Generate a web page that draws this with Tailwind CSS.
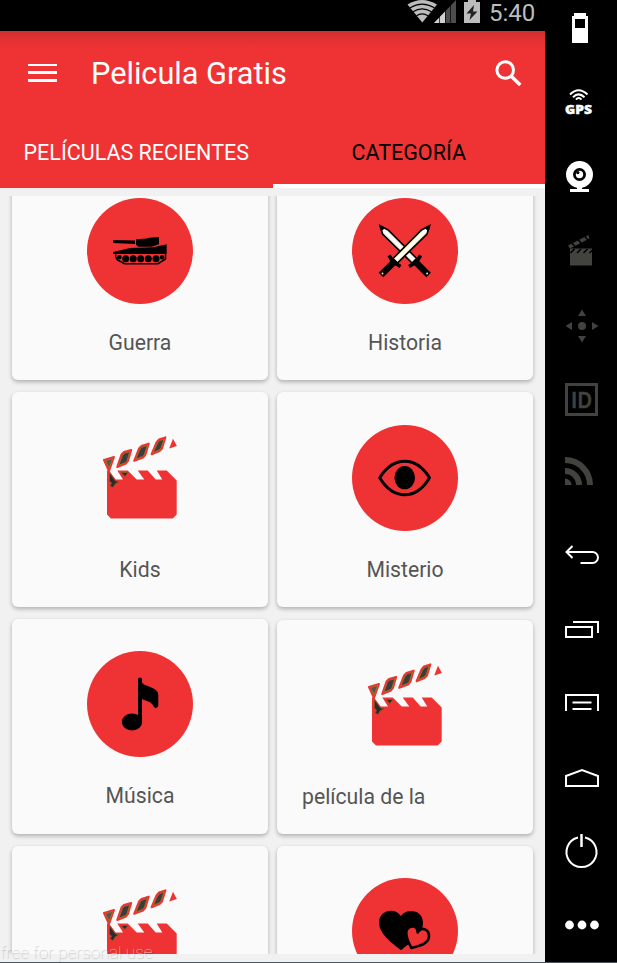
<!DOCTYPE html>
<html lang="es">
<head>
  <meta charset="UTF-8" />
  <meta name="viewport" content="width=device-width, initial-scale=1.0" />
  <title>Pelicula Gratis</title>
  <script src="https://cdn.jsdelivr.net/npm/@tailwindcss/browser@4"></script>
</head>
<body class="relative flex h-[963px] w-[617px] overflow-hidden bg-black font-['Roboto',sans-serif]">

  <!-- shared clapperboard icon -->
  <svg class="hidden">
    <symbol id="clapper" viewBox="0 0 106 106">
      <path fill="#ef3234" d="M20 45.4H22L28.7 54.4H36L30.3 45.4H40.7L49.7 54.4H57.3L50.7 45.4H60.7L68.7 54.4H75.3L69.7 45.4H79.7L89.7 55.4V89.5L85.7 93.4H24L20 89.5Z" />
      <g fill="#3c3c3c" stroke="#ef3234" stroke-width="2" stroke-linejoin="round">
        <path d="M17 35L27 32L22 46Z" fill="#555" />
        <path d="M34.500 29.500L37 27L44.200 25L41 36L39 38.500L30.200 42Z" />
        <path d="M52 23.500L54.500 21L61.700 18.600L58.500 29.500L56 32.500L47.200 35.800Z" />
        <path d="M69.500 17.500L72 14.500L78.400 12.400L75 23.500L72.500 26L64.600 29.200Z" />
      </g>
      <g fill="none" stroke="#a07a1c" stroke-width=".8">
        <path d="M18.600 35.600L25.700 33.500L22.200 43Z" />
        <path d="M35.500 30.300L37.700 28.200L42.800 26.800L39.800 36.200L38 37.800L31.800 40.200Z" />
        <path d="M53 24.300L55.200 22.200L60.300 20.400L57.300 29.500L55.300 31.500L48.800 34Z" />
        <path d="M70.500 18.200L72.700 15.700L77 14.200L73.900 23.200L71.900 25L66.200 27.400Z" />
      </g>
      <path fill="#ef3234" d="M86 13.800L89.900 21L82.200 23.400Z" />
      <path fill="#2b2b2b" stroke="#8b5a1a" stroke-width=".8" d="M22.500 47.500L28 55.500L32 57L28.500 58.500L26 62.500L23 61L24.500 58L22.300 56ZM34 47.500H41L38 51.500Z" />
    </symbol>
  </svg>

  <div class="relative flex h-[962px] w-[545px] flex-col bg-[#f1f1f1]">

    <!-- status bar -->
    <div class="flex h-[31px] shrink-0 items-start justify-end bg-black">
      <svg class="h-[31px] w-[82px]" viewBox="405 0 82 31">
        <path fill="#bdbdbd" d="M407.500 4.500Q422-4.500 437 4.500L422.300 22.500Z" />
        <g fill="none" stroke="#000" stroke-width="1.200">
          <path d="M410 7.800Q422 .3 434.500 7.800M413 11.800Q422 6 431.500 11.800M416.500 15.800Q422 12 428 15.800" />
        </g>
        <path fill="#4d4d4d" d="M434 23L456 0V23Z" />
        <path fill="#d0d0d0" d="M434 23L445 11.500V23Z" />
        <path stroke="#000" stroke-width=".7" d="M439.500 10V23M445.500 5V23M450.500 0V23" />
        <path fill="#bdbdbd" d="M464 2H468V0H476V2H480V23H464Z" />
        <path fill="#222" d="M474 5L466.500 13.500H471L469.500 20L477.500 11.500H473Z" />
      </svg>
      <span class="w-[58px] pl-[2px] text-[24px] leading-[26px] text-[#bdbdbd]">5:40</span>
    </div>

    <!-- toolbar + tabs -->
    <header class="flex h-[157px] shrink-0 flex-col bg-[#ef3234] bg-linear-to-b from-[#d22f30] to-[#ef3234] to-[16px] text-white">
      <div class="flex h-[86px] items-center pr-5 pl-7">
        <svg class="h-5 w-[29px]" viewBox="0 1 29 20" fill="#fff"><path d="M0 0H29V3H0ZM0 8H29V11H0ZM0 16H29V19H0Z" /></svg>
        <h1 class="ml-[34px] grow text-[30.700px] leading-[36px]">Pelicula Gratis</h1>
        <svg class="mr-0.5 h-7 w-7" viewBox="495 60 28 28" fill="none" stroke="#fff">
          <circle cx="505.200" cy="70" r="8.300" stroke-width="3" />
          <path d="M511 76L520.300 85" stroke-width="3.600" />
        </svg>
      </div>
      <nav class="grid h-[71px] grid-cols-2 text-center text-[21.500px] leading-[71px]">
        <a class="h-[71px]">PELÍCULAS RECIENTES</a>
        <a class="h-[71px] border-b-4 border-white text-black">CATEGORÍA</a>
      </nav>
    </header>

    <!-- categories -->
    <main class="mt-2 h-[758px] shrink-0 overflow-hidden text-[21.200px] text-[#555]">
      <div class="-mt-[30.400px] grid grid-cols-[256px_256px] gap-x-[9px] gap-y-3 pl-3">

        <section class="flex h-[214.700px] flex-col items-center rounded-md bg-[#fafafa] pt-[32.500px] shadow-[0_2px_4px_rgba(0,0,0,0.28)]">
          <svg class="size-[106px]" viewBox="0 0 106 106">
            <circle cx="53" cy="53" r="53" fill="#ef3234" />
            <path d="M26 42L48 42.500V46L26 45ZM49 41.300L60 40.500L62 39.800L72 39V46.300L64.700 48.700H51.300L49 46.700ZM26 54L43 50L66 49.300L79.700 46.300V56H26Z" />
            <path fill="none" stroke="#000" stroke-width="1.500" d="M28.700 56.500V59L30.500 62L37.500 65.700H71L78.500 61V56" />
            <circle cx="38.700" cy="60.700" r="3.500" /><circle cx="46.200" cy="60.700" r="3.500" /><circle cx="53.700" cy="60.700" r="3.500" /><circle cx="61.300" cy="60.700" r="3.500" /><circle cx="69" cy="60.700" r="3.500" />
            <circle cx="32.400" cy="59.300" r="2.200" /><circle cx="75" cy="59.300" r="2.200" />
          </svg>
          <p class="mt-[23px] leading-8">Guerra</p>
        </section>

        <section class="flex h-[214.700px] flex-col items-center rounded-md bg-[#fafafa] pt-[32.500px] shadow-[0_2px_4px_rgba(0,0,0,0.28)]">
          <svg class="size-[106px]" viewBox="0 0 106 106">
            <defs>
              <g id="sword">
                <path fill="#fff" stroke="#000" stroke-width="1.700" d="M77.500 27.800L75 36L45.500 65L41 60.500L69.500 32Z" />
                <path d="M78.500 27L76.500 33.500L72.500 30Z" />
                <path fill="none" stroke="#d8bd55" stroke-width=".5" d="M74.500 34.500L45.500 63.400M70 33L42.500 60.500" />
                <path fill="none" stroke="#000" stroke-width="3.600" d="M37 57.300L39.500 61.500L44.500 66L48.500 68.500" />
                <path fill="none" stroke="#000" stroke-width="6.500" d="M43.500 62.500L29 77" />
                <circle cx="30.500" cy="75.500" r="1" fill="#f4e5a0" />
              </g>
            </defs>
            <circle cx="53" cy="53" r="53" fill="#ef3234" />
            <use href="#sword" transform="translate(105.600 0) scale(-1 1)" />
            <use href="#sword" />
          </svg>
          <p class="mt-[23px] leading-8">Historia</p>
        </section>

        <section class="flex h-[214.700px] flex-col items-center rounded-md bg-[#fafafa] pt-[32.500px] shadow-[0_2px_4px_rgba(0,0,0,0.28)]">
          <svg class="size-[106px]"><use href="#clapper" /></svg>
          <p class="mt-[23px] leading-8">Kids</p>
        </section>

        <section class="flex h-[214.700px] flex-col items-center rounded-md bg-[#fafafa] pt-[32.500px] shadow-[0_2px_4px_rgba(0,0,0,0.28)]">
          <svg class="size-[106px]" viewBox="0 0 106 106">
            <circle cx="53" cy="53" r="53" fill="#ef3234" />
            <path fill="none" stroke="#000" stroke-width="3" stroke-linejoin="round" d="M27.700 52.700Q38 36.200 52.700 36.200T77.500 52.700Q67.500 69.700 52.700 69.700T27.700 52.700Z" />
            <ellipse cx="52.700" cy="52.700" rx="10.300" ry="11.600" />
          </svg>
          <p class="mt-[23px] leading-8">Misterio</p>
        </section>

        <section class="flex h-[214.700px] flex-col items-center rounded-md bg-[#fafafa] pt-[32.500px] shadow-[0_2px_4px_rgba(0,0,0,0.28)]">
          <svg class="size-[106px]" viewBox="0 0 106 106">
            <circle cx="53" cy="53" r="53" fill="#ef3234" />
            <ellipse cx="45" cy="71" rx="10.200" ry="8.400" />
            <path d="M51 28Q51 26.500 53 26.500T55 28V31.500C58 36 71.300 36 71.300 44V54Q71 57 68.500 57Q66.500 56.500 66 54C63 50 57 49.500 55 48V71H51Z" />
          </svg>
          <p class="mt-[23px] leading-8">Música</p>
        </section>

        <section class="mt-px flex h-[213.700px] flex-col items-center rounded-md bg-[#fafafa] pt-[32.500px] shadow-[0_2px_4px_rgba(0,0,0,0.28)]">
          <svg class="size-[106px]"><use href="#clapper" /></svg>
          <p class="mt-[23px] w-full pl-[25px] leading-8">película de la</p>
        </section>

        <section class="flex h-[214.700px] flex-col items-center rounded-md bg-[#fafafa] pt-[32.500px] shadow-[0_2px_4px_rgba(0,0,0,0.28)]">
          <svg class="size-[106px]"><use href="#clapper" /></svg>
        </section>

        <section class="flex h-[214.700px] flex-col items-center rounded-md bg-[#fafafa] pt-[32.500px] shadow-[0_2px_4px_rgba(0,0,0,0.28)]">
          <svg class="size-[106px]" viewBox="0 0 106 106">
            <circle cx="53" cy="53" r="53" fill="#ef3234" />
            <path d="M49 72.300C46 69 27 58 27 44.500C27 32 43 29 49 38C54 30 71 31 71 45C71 58 53 68 49 72.300Z" />
            <path fill="#ef3234" stroke="#000" stroke-width="2.600" stroke-linejoin="round" d="M59.500 70C57 66 52 55 55.500 51C59 46.500 65.500 48 65.700 54.500C69 48 77 51 77 58C77 66 67 68 59.500 70Z" />
          </svg>
        </section>
      </div>
    </main>

    <!-- watermark -->
    <p class="absolute bottom-0 left-0 text-[17.300px] leading-[20px] font-thin whitespace-nowrap text-[#fff]/70 [text-shadow:1px_1px_1px_rgba(0,0,0,0.28)]">free for personal use</p>
  </div>

  <!-- emulator side controls -->
  <aside class="flex w-[72px] flex-col bg-black">
    <svg class="h-[65px] w-[72px]" viewBox="545 0 72 65"><path fill="#fff" fill-rule="evenodd" d="M572 16H574V13H586V16H588V43H572ZM575 19V28H585V19Z" /></svg>
    <svg class="h-[75px] w-[72px]" viewBox="545 65 72 75">
      <path fill="none" stroke="#fff" stroke-width="2" d="M570 94.500Q578.500 86 587.500 94.500M573 97.200Q578.500 91.500 584.500 97.200M576 99.600Q578.500 96.500 581.500 99.600" />
      <text x="565" y="113.700" fill="#fff" font-family="Open Sans" font-weight="800" font-size="12" stroke="#fff" stroke-width=".4" textLength="27" lengthAdjust="spacingAndGlyphs">GPS</text>
    </svg>
    <svg class="h-[75px] w-[72px]" viewBox="545 140 72 75" fill="#fff">
      <circle cx="579.500" cy="174.500" r="13.500" />
      <path d="M577 186H582V189H589V192H570V189H577Z" />
      <circle cx="579.500" cy="174.500" r="6.500" fill="#000" />
      <circle cx="579.500" cy="174.500" r="3.700" />
      <circle cx="577.800" cy="172.600" r="1.700" fill="#000" />
    </svg>
    <svg class="h-[75px] w-[72px]" viewBox="545 215 72 75">
      <path fill="#42423e" d="M570 248.500H592V265.500H570ZM568 245.500L588.500 235L589.500 238.500L570 248.500Z" />
      <path stroke="#000" stroke-width="1.500" d="M571 242L575 246.500M577.500 239L581.500 243.500M584 235.500L588 240M574.500 249L570.500 253M581 249L577 253M587.500 249L583.500 253M593 249.500L589.500 253" />
    </svg>
    <svg class="h-[75px] w-[72px]" viewBox="545 290 72 75" fill="#42423e">
      <circle cx="582" cy="326" r="4" />
      <path d="M582 309.500L586 316H578ZM582 342.500L586 336H578ZM565.500 326L572 322V330ZM598.500 326L592 322V330Z" />
    </svg>
    <svg class="h-[75px] w-[72px]" viewBox="545 365 72 75">
      <rect x="566.500" y="384.500" width="30" height="30" fill="none" stroke="#42423e" stroke-width="3" />
      <text x="571" y="408" fill="#42423e" font-family="Open Sans" font-weight="600" font-size="22" stroke="#42423e" stroke-width=".7" textLength="21" lengthAdjust="spacingAndGlyphs">ID</text>
    </svg>
    <svg class="h-[75px] w-[72px]" viewBox="545 440 72 75">
      <path fill="none" stroke="#42423e" stroke-width="6" d="M565 460A25 25 0 0 1 590 485M565 471A14 14 0 0 1 579 485" />
      <path fill="#42423e" d="M565 478.500A6.500 6.500 0 0 1 571.500 485H565Z" />
    </svg>
    <svg class="h-[75px] w-[72px]" viewBox="545 515 72 75" fill="none" stroke="#fff" stroke-width="2">
      <path d="M572.500 546L566.500 552L572.500 558M566 552H592.500A5.500 5.500 0 0 1 592.500 563H580.500" />
    </svg>
    <svg class="h-[75px] w-[72px]" viewBox="545 590 72 75" fill="none" stroke="#fff" stroke-width="2">
      <path d="M566 627H592V637H566ZM573 622H598V633" />
    </svg>
    <svg class="h-[75px] w-[72px]" viewBox="545 665 72 75" fill="none" stroke="#fff" stroke-width="2">
      <path d="M566 711V695H598V711M572.500 702.500H591.500M572.500 709H591.500" />
    </svg>
    <svg class="h-[75px] w-[72px]" viewBox="545 740 72 75" fill="none" stroke="#fff" stroke-width="2">
      <path d="M566 786V776L582 770L598 776V786Z" />
    </svg>
    <svg class="h-[75px] w-[72px]" viewBox="545 815 72 75" fill="none" stroke="#fff">
      <path stroke-width="2" d="M578 837.500A15 15 0 1 0 585 837.500" />
      <path stroke-width="2.500" d="M581.500 834V847" />
    </svg>
    <svg class="h-[73px] w-[72px]" viewBox="545 890 72 73" fill="#fff">
      <circle cx="569.500" cy="925" r="4.400" /><circle cx="582" cy="925" r="4.400" /><circle cx="594.500" cy="925" r="4.400" />
    </svg>
  </aside>

  <div class="absolute bottom-0 left-0 h-px w-full bg-[#4a5563]"></div>
</body>
</html>
